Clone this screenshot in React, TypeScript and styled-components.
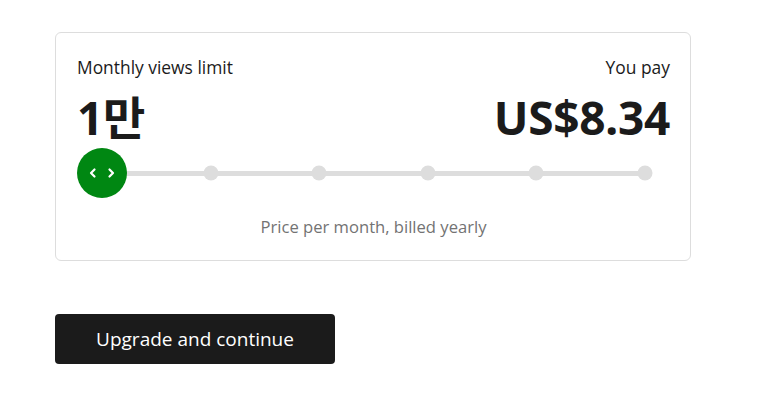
import React from 'react';
import styled, {createGlobalStyle} from "styled-components";

const GlobalStyle = createGlobalStyle`
  body {
    margin: 0;
    background: #fff;
    font-family: "Open Sans", "Noto Sans", "Noto Sans CJK KR", sans-serif;
    color: #1b1b1b;
  }
`

const steps = [0, 1, 2, 3, 4, 5]

export default function App() {
    return (
        <>
            <GlobalStyle/>
            <Page>
                <Card>
                    <TopRow>
                        <Column>
                            <Label>Monthly views limit</Label>
                            <BigValue>1만</BigValue>
                        </Column>
                        <Column $right>
                            <Label>You pay</Label>
                            <BigValue>US$8.34</BigValue>
                        </Column>
                    </TopRow>
                    <Slider>
                        <Track>
                            {steps.slice(1).map((s) => (
                                <Dot key={s} style={{left: `${(s / (steps.length - 1)) * 100}%`}}/>
                            ))}
                            <Thumb>
                                <svg width="30" height="14" viewBox="0 0 30 14" fill="none" stroke="#fff"
                                     strokeWidth="2.2" strokeLinecap="round" strokeLinejoin="round">
                                    <path d="M7.5 3.5 L4 7 L7.5 10.5"/>
                                    <path d="M22.5 3.5 L26 7 L22.5 10.5"/>
                                </svg>
                            </Thumb>
                        </Track>
                    </Slider>
                    <Caption>Price per month, billed yearly</Caption>
                </Card>
                <UpgradeButton>Upgrade and continue</UpgradeButton>
            </Page>
        </>
    );
}

const Page = styled.div`
  padding: 32px 68px 0 55px;
  display: flex;
  flex-direction: column;
  align-items: flex-start;
  gap: 53px;
`

const Card = styled.div`
  box-sizing: border-box;
  width: 636px;
  height: 229px;
  border: 1px solid #dddddd;
  border-radius: 6px;
  padding: 23px 20px 0 21px;
`

const TopRow = styled.div`
  display: flex;
  justify-content: space-between;
`

const Column = styled.div<{ $right?: boolean }>`
  display: flex;
  flex-direction: column;
  align-items: ${p => p.$right ? 'flex-end' : 'flex-start'};
`

const Label = styled.div`
  font-size: 17.4px;
  line-height: 22px;
  font-weight: 500;
`

const BigValue = styled.div`
  font-family: "Noto Sans", "Noto Sans CJK KR", sans-serif;
  font-size: 46px;
  font-weight: 700;
  line-height: 56px;
  height: 56px;
  margin-top: 11px;
  letter-spacing: -0.3px;
`

const Slider = styled.div`
  padding: 0 25px;
  margin-top: 3px;
  height: 50px;
  display: flex;
  align-items: center;
`

const Track = styled.div`
  position: relative;
  flex: 1;
  height: 5px;
  border-radius: 3px;
  background: #dddddd;
`

const Dot = styled.span`
  position: absolute;
  top: 50%;
  width: 15px;
  height: 15px;
  border-radius: 50%;
  background: #dddddd;
  transform: translate(-50%, -50%);
`

const Thumb = styled.span`
  position: absolute;
  left: 0;
  top: 50%;
  width: 50px;
  height: 50px;
  transform: translate(-50%, -50%);
  border-radius: 50%;
  background: #008712;
  display: flex;
  align-items: center;
  justify-content: center;
`

const Caption = styled.div`
  margin-top: 18px;
  text-align: center;
  font-size: 16.6px;
  line-height: 22px;
  color: #737373;
`

const UpgradeButton = styled.button`
  width: 280px;
  height: 50px;
  border: none;
  border-radius: 4px;
  background: #1b1b1b;
  color: #fff;
  font-family: "Open Sans", "Noto Sans", sans-serif;
  font-size: 19px;
  font-weight: 500;
  cursor: pointer;
`
